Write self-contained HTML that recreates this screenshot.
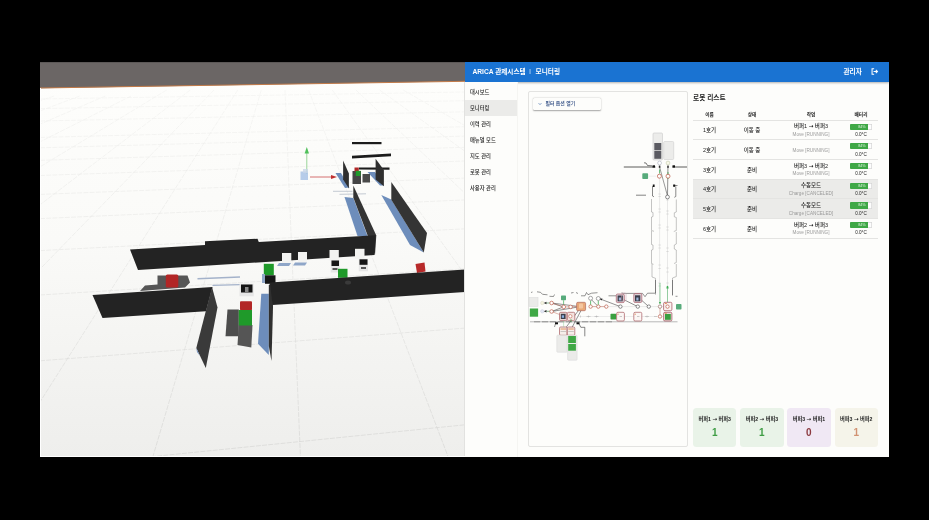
<!DOCTYPE html>
<html lang="ko">
<head>
<meta charset="utf-8">
<title>ARICA 관제시스템 | 모니터링</title>
<style>
*{box-sizing:border-box;margin:0;padding:0}
html,body{width:929px;height:520px;overflow:hidden;background:#000}
body{position:relative;font-family:"Liberation Sans","Noto Sans CJK KR",sans-serif;color:#222}
.abs{position:absolute}
#scene{position:absolute;left:0;top:0;width:929px;height:520px}
#app{position:absolute;left:465px;top:62px;width:424px;height:395px;background:#fdfdfb;overflow:hidden;will-change:transform}
#hdr{position:absolute;left:0;top:0;width:424px;height:20px;background:#1a73d2;color:#fff;font-weight:bold;font-size:6.65px;line-height:20px;box-shadow:0 1px 2px rgba(0,0,0,.3)}
#hdr .t{position:absolute;left:7.5px;top:-0.5px;white-space:nowrap}
#hdr .u{position:absolute;left:378.5px;top:-0.5px;white-space:nowrap}
#side{position:absolute;left:0;top:20px;width:52.5px;height:375px;background:#fdfdfb;border-right:1px solid #f5f5f2}
#side div{position:absolute;left:0;width:52px;height:16px;line-height:16px;padding-left:5px;font-size:5.3px;font-weight:500;color:#1c1c1c;white-space:nowrap}
#side div.sel{background:#ebebe9;height:15.5px}
#mapcard{position:absolute;left:62.5px;top:29px;width:160.5px;height:356px;border:1px solid #e3e3e1;border-radius:2px;background:#fdfdfb}
#filter{position:absolute;left:68px;top:35.5px;width:67.5px;height:12.5px;background:#fdfdfb;border-radius:1.5px;box-shadow:0 0.5px 1.5px rgba(0,0,0,.35);font-size:4.9px;line-height:12.5px;font-weight:500;color:#24427c;white-space:nowrap}
#filter span{position:absolute;left:12.5px;top:0}
h2{position:absolute;left:228px;top:28.5px;font-size:6.7px;line-height:14px;font-weight:bold;color:#222;white-space:nowrap}
table{position:absolute;left:228px;top:45px;width:185px;border-collapse:collapse;table-layout:fixed;font-size:5.5px;font-weight:500;color:#1c1c1c}
th{height:13.1px;font-size:4.7px;font-weight:bold;border-bottom:1px solid #e4e4e2;text-align:center;vertical-align:middle;padding-top:1.2px}
td{height:19.7px;border-bottom:1px solid #e4e4e2;text-align:center;vertical-align:middle;line-height:7.5px;white-space:nowrap;padding-top:2.4px}
tr.sel td{background:#ebebe9}
td .s{display:block;font-size:4.65px;color:#9a9a9a}
td .k{display:block;font-size:4.6px;color:#222;margin-top:1.2px}
td.w{padding-top:1.9px}
td.b{padding-top:2.2px}
.ar{font-family:'DejaVu Sans',sans-serif;font-size:5.6px;line-height:1px;font-weight:bold}
.bat{display:block;margin:0 auto;width:22.8px;height:6.2px;box-shadow:inset 0 0 0 0.5px #c4c4c4;border-radius:1px;background:#fdfdfd;position:relative;overflow:hidden}
.bat i{position:absolute;left:0;top:0;height:100%;width:82%;background:#3fa846;color:#dff0df;font-style:normal;font-size:3.8px;line-height:6.2px;text-align:center;text-indent:6px}
.cnt{position:absolute;top:345.5px;width:43.4px;height:39px;border-radius:3.5px;text-align:center}
.cnt b{display:block;font-size:5.2px;line-height:7px;margin-top:8.7px;color:#222;white-space:nowrap}
.cnt em{display:block;font-style:normal;font-weight:bold;font-size:10px;line-height:11px;margin-top:3.4px}
</style>
</head>
<body>
<svg id="scene" viewBox="0 0 929 520">
<defs>
<linearGradient id="fl" x1="0" y1="0" x2="0" y2="1"><stop offset="0" stop-color="#fefefc"/><stop offset="0.45" stop-color="#fafaf8"/><stop offset="1" stop-color="#eeeeec"/></linearGradient>
<linearGradient id="gg" gradientUnits="userSpaceOnUse" x1="0" y1="88" x2="0" y2="457"><stop offset="0" stop-color="#f1f1ef"/><stop offset="0.35" stop-color="#e6e6e4"/><stop offset="1" stop-color="#cfcfcd"/></linearGradient>
</defs>
<rect x="40" y="62" width="425" height="395" fill="url(#fl)"/>
<polygon points="40,62 465,62 465,81.2 40,88.2" fill="#6b6665"/>
<line x1="40" y1="88" x2="465" y2="81.3" stroke="#c27a48" stroke-width="1"/>
<!-- SCENE-START -->
<!-- floor grid -->
<clipPath id="fc"><polygon points="40,88.3 465,82 465,457 40,457"/></clipPath>
<g clip-path="url(#fc)" stroke="url(#gg)" stroke-width="0.55" fill="none" stroke-dasharray="5 1.2">
<line x1="40.0" y1="468.0" x2="465.0" y2="424.8"/>
<line x1="40.0" y1="360.8" x2="465.0" y2="328.1"/>
<line x1="40.0" y1="295.0" x2="465.0" y2="268.8"/>
<line x1="40.0" y1="250.6" x2="465.0" y2="228.8"/>
<line x1="40.0" y1="218.6" x2="465.0" y2="199.9"/>
<line x1="40.0" y1="194.4" x2="465.0" y2="178.1"/>
<line x1="40.0" y1="175.5" x2="465.0" y2="161.0"/>
<line x1="40.0" y1="160.3" x2="465.0" y2="147.3"/>
<line x1="40.0" y1="147.8" x2="465.0" y2="136.1"/>
<line x1="40.0" y1="137.4" x2="465.0" y2="126.7"/>
<line x1="40.0" y1="121.0" x2="465.0" y2="111.8"/>
<line x1="40.0" y1="108.6" x2="465.0" y2="100.7"/>
<line x1="40.0" y1="99.0" x2="465.0" y2="92.0"/>
<line x1="2.7" y1="96.0" x2="-1327.7" y2="458.0"/>
<line x1="28.4" y1="96.0" x2="-1179.7" y2="458.0"/>
<line x1="54.1" y1="96.0" x2="-1031.6" y2="458.0"/>
<line x1="79.7" y1="96.0" x2="-883.6" y2="458.0"/>
<line x1="105.4" y1="96.0" x2="-735.6" y2="458.0"/>
<line x1="131.1" y1="96.0" x2="-587.6" y2="458.0"/>
<line x1="166.7" y1="90.0" x2="-439.6" y2="458.0"/>
<line x1="190.3" y1="90.0" x2="-291.5" y2="458.0"/>
<line x1="214.0" y1="90.0" x2="-143.5" y2="458.0"/>
<line x1="237.7" y1="90.0" x2="4.5" y2="458.0"/>
<line x1="261.3" y1="90.0" x2="152.5" y2="458.0"/>
<line x1="285.0" y1="90.0" x2="300.5" y2="458.0"/>
<line x1="308.6" y1="90.0" x2="448.6" y2="458.0"/>
<line x1="332.3" y1="90.0" x2="596.6" y2="458.0"/>
<line x1="355.9" y1="90.0" x2="744.6" y2="458.0"/>
<line x1="379.6" y1="90.0" x2="892.6" y2="458.0"/>
<line x1="403.2" y1="90.0" x2="1040.7" y2="458.0"/>
</g>
<!-- far bars -->
<rect x="352" y="142" width="29.5" height="2.2" fill="#1c1c1c"/>
<polygon points="352,155.8 391,153.6 391,156.2 352,158.4" fill="#1c1c1c"/>
<polygon points="359,167.4 389.5,167.6 389.5,169.8 359,169.6" fill="#1c1c1c"/>
<!-- gizmo -->
<line x1="306.8" y1="152" x2="306.8" y2="174" stroke="#8fd08f" stroke-width="0.9"/>
<polygon points="306.8,147 309,153.5 304.600,153.500" fill="#4fc05a"/>
<rect x="300.500" y="171.500" width="7.500" height="8.500" fill="#a9c3e6" opacity="0.85"/>
<rect x="303" y="169" width="5" height="4" fill="#c9d6e8" opacity="0.8"/>
<line x1="310" y1="177" x2="332" y2="177" stroke="#d06060" stroke-width="0.9"/>
<polygon points="337,177 331,175 331,179" fill="#c03030"/>
<!-- far small walls + shadows -->
<polygon points="335.500,173 341,173 349.500,187.500 345,188" fill="#6d8dbb"/>
<polygon points="343.1,160.6 348.9,173.5 348.9,188.6 343.1,179.4" fill="#2f2f2f"/>
<polygon points="367.500,172 375,172 383.800,185.500 380,185.500" fill="#6d8dbb"/>
<!-- far cubes -->
<rect x="352.500" y="171" width="8.500" height="13" fill="#444"/>
<rect x="362.500" y="174" width="7.500" height="8.500" fill="#4a4a4a"/>
<rect x="354.500" y="167.500" width="4.300" height="4" fill="#b02828"/>
<rect x="355.800" y="170.800" width="4.700" height="5.200" fill="#1f9a2a"/>
<polygon points="375.6,158.8 383.9,170 383.9,186.3 375.6,179.4" fill="#2f2f2f"/>
<line x1="333" y1="191.300" x2="352.500" y2="191.300" stroke="#b5bcc8" stroke-width="0.8"/>
<line x1="339.500" y1="194.300" x2="366" y2="193.800" stroke="#b5bcc8" stroke-width="0.8"/>
<!-- long walls shadows -->
<polygon points="344.500,197 353.300,198 367.500,236 357.500,236" fill="#6d8dbb"/>
<polygon points="381.300,195 391.300,199.500 423.800,252.500 410,245" fill="#6d8dbb"/>
<!-- long walls -->
<polygon points="353.300,185.500 376.300,235.500 375,255 353.300,197.500" fill="#343434"/>
<polygon points="391.300,181.900 427,233 423.800,252.500 391.300,199.800" fill="#343434"/>
<!-- back wall -->
<polygon points="130,249.500 205,245 205,241.300 257.500,238.800 258.800,242 375.500,235.200 374.500,255 138,270" fill="#232323"/>
<!-- white cubes -->
<g fill="#f3f3f1">
<rect x="282" y="253" width="9.300" height="10"/>
<rect x="298" y="252" width="9" height="10.500"/>
<rect x="329.500" y="250" width="9.300" height="10.500"/>
<rect x="355" y="248.800" width="9.500" height="10"/>
</g>
<g fill="#8fa6c8">
<polygon points="279,263 291,263 289,266 277,266"/>
<polygon points="295,262.500 307,262.500 305,265.500 293,265.500"/>
</g>
<!-- robots on corridor -->
<g>
<rect x="330.800" y="260" width="8.700" height="12.500" fill="#e6e6e6"/>
<rect x="331.500" y="260.500" width="7.500" height="5.500" fill="#161616"/>
<rect x="332.500" y="268" width="5" height="2" fill="#555"/>
<rect x="358.800" y="258.800" width="9.200" height="12.500" fill="#e6e6e6"/>
<rect x="359.500" y="259.300" width="8" height="5.500" fill="#161616"/>
<rect x="361" y="267" width="5" height="2" fill="#555"/>
</g>
<rect x="338" y="268.800" width="9.500" height="9" fill="#1f9a2a"/>
<polygon points="415.500,264 424.500,262.500 425.500,271.500 417,273" fill="#b82a2a"/>
<!-- platform + red cube upper-left -->
<polygon points="157.500,275.500 187.500,275.500 190,282.500 185,287.500 140,291 145,285.500 157.500,284.500" fill="#565656"/>
<rect x="165.800" y="274.500" width="12.500" height="13" rx="1.500" fill="#b22626"/>
<line x1="197.500" y1="278.800" x2="240" y2="277" stroke="#a4b2ca" stroke-width="1.600"/>
<line x1="212.500" y1="285.300" x2="240" y2="284.600" stroke="#a4b2ca" stroke-width="1.300"/>
<!-- green cube + robot at gap -->
<rect x="263.800" y="263.800" width="10" height="11.500" fill="#1f9a2a"/>
<rect x="265" y="275.300" width="10.500" height="8.500" fill="#161616"/>
<rect x="262" y="274" width="3" height="9" fill="#8fa6c8"/>
<!-- robot alcove -->
<rect x="239.500" y="283.800" width="14.300" height="12.500" fill="#e6e6e6"/>
<rect x="241" y="284.500" width="11.500" height="8" fill="#141414"/>
<rect x="245" y="287" width="3.500" height="5" fill="#888"/>
<!-- alcove platforms and cubes -->
<polygon points="227.500,309.500 238.800,309.500 238.800,336.300 225.500,336.300" fill="#4d4d4d"/>
<polygon points="238.800,325 252.500,325 251.300,347.500 237.500,345" fill="#555"/>
<rect x="240" y="301.300" width="12" height="9" rx="1" fill="#b22626"/>
<rect x="238.800" y="310" width="13.200" height="15.500" fill="#1f9a2a"/>
<!-- front walls -->
<polygon points="92.500,295 212.500,287 206,311.200 102.500,318" fill="#232323"/>
<polygon points="212,287 217.500,307.500 205.800,368 196.300,348" fill="#3a3a3a"/>
<polygon points="196.300,348 200,356 197,352" fill="#6d8dbb"/>
<polygon points="261.300,293.800 268.800,293.800 268.800,355 258,343.800" fill="#6d8dbb"/>
<polygon points="268.800,285 272.500,282.500 273,307.500 271.500,361 268.800,346" fill="#303030"/>
<polygon points="270,282.500 465,269.500 465,292 272.500,305" fill="#232323"/>
<ellipse cx="348" cy="282.500" rx="3" ry="2" fill="#3a3a3a"/>
<!-- white border -->
<line x1="40" y1="62.5" x2="465" y2="62.5" stroke="#5c5857" stroke-width="1"/>
<line x1="464.5" y1="82" x2="464.5" y2="457" stroke="#e2e2e0" stroke-width="1"/>
<line x1="40.500" y1="88" x2="40.500" y2="457" stroke="#fff" stroke-width="1"/>
<line x1="40" y1="456.500" x2="465" y2="456.500" stroke="#fff" stroke-width="1"/>
<!-- SCENE-END -->
</svg>
<div id="app">
<div id="hdr"><span class="t">ARICA 관제시스템</span><span class="t" style="left:64.2px;font-weight:normal;font-size:6px;top:-0.8px">|</span><span class="t" style="left:70.6px">모니터링</span><span class="u">관리자</span>
<svg class="abs" style="left:405px;top:4.8px" width="9" height="9" viewBox="0 0 24 24"><path d="M11 4.500H5.500v15H11" fill="none" stroke="#fff" stroke-width="2.8"/><path d="M9.500 12h10M15.500 7.500l4.500 4.500-4.500 4.500" fill="none" stroke="#fff" stroke-width="2.800"/></svg>
</div>
<div id="side">
<div style="top:2.1px">대시보드</div>
<div class="sel" style="top:18.2px">모니터링</div>
<div style="top:34.1px">이력 관리</div>
<div style="top:50.1px">매뉴얼 모드</div>
<div style="top:65.9px">지도 관리</div>
<div style="top:81.9px">로봇 관리</div>
<div style="top:97.9px">사용자 관리</div>
</div>
<div id="mapcard"></div>
<div id="filter"><svg class="abs" style="left:5px;top:4.5px" width="4" height="4" viewBox="0 0 10 10"><path d="M1.5 3l3.5 3.5L8.500 3" fill="none" stroke="#1a4f9c" stroke-width="1.4"/></svg><span>필터 옵션 열기</span></div>
<h2>로봇 리스트</h2>
<table>
<colgroup><col style="width:33px"><col style="width:52px"><col style="width:66px"><col style="width:34px"></colgroup>
<tr><th>이름</th><th>상태</th><th>작업</th><th>배터리</th></tr>
<tr><td>1호기</td><td>이동 중</td><td class="w">버퍼1 <span class="ar">→</span> 버퍼3<span class="s">Move [RUNNING]</span></td><td class="b"><span class="bat"><i>84%</i></span><span class="k">0.0°C</span></td></tr>
<tr><td>2호기</td><td>이동 중</td><td><span class="s">Move [RUNNING]</span></td><td class="b"><span class="bat"><i>84%</i></span><span class="k">0.0°C</span></td></tr>
<tr><td>3호기</td><td>준비</td><td class="w">버퍼3 <span class="ar">→</span> 버퍼2<span class="s">Move [RUNNING]</span></td><td class="b"><span class="bat"><i>84%</i></span><span class="k">0.0°C</span></td></tr>
<tr class="sel"><td>4호기</td><td>준비</td><td class="w">수동모드<span class="s">Charge [CANCELED]</span></td><td class="b"><span class="bat"><i>84%</i></span><span class="k">0.0°C</span></td></tr>
<tr class="sel"><td>5호기</td><td>준비</td><td class="w">수동모드<span class="s">Charge [CANCELED]</span></td><td class="b"><span class="bat"><i>84%</i></span><span class="k">0.0°C</span></td></tr>
<tr><td>6호기</td><td>준비</td><td class="w">버퍼2 <span class="ar">→</span> 버퍼3<span class="s">Move [RUNNING]</span></td><td class="b"><span class="bat"><i>84%</i></span><span class="k">0.0°C</span></td></tr>
</table>
<div class="cnt" style="left:228.1px;background:#e9f3e8"><b>버퍼1 <span class="ar">→</span> 버퍼3</b><em style="color:#3f9d45">1</em></div>
<div class="cnt" style="left:275.2px;background:#e9f3e8"><b>버퍼2 <span class="ar">→</span> 버퍼3</b><em style="color:#3f9d45">1</em></div>
<div class="cnt" style="left:322.2px;background:#f0e8f4"><b>버퍼3 <span class="ar">→</span> 버퍼1</b><em style="color:#8c3a40">0</em></div>
<div class="cnt" style="left:369.6px;background:#f5f4ea"><b>버퍼3 <span class="ar">→</span> 버퍼2</b><em style="color:#d19272">1</em></div>
<svg id="map" class="abs" style="left:-465px;top:-62px" width="929" height="520" viewBox="0 0 929 520">
<!-- MAP-START -->
<!-- top storage boxes -->
<rect x="653" y="133" width="9.500" height="27" rx="1" fill="#ececea" stroke="#c9c9c9" stroke-width="0.6"/>
<rect x="654.300" y="143" width="7" height="7.300" fill="#5b5b62"/>
<rect x="654.300" y="151" width="7" height="7.800" fill="#5b5b62"/>
<rect x="663.700" y="141.500" width="10" height="18" rx="1" fill="#ececea" stroke="#cfcfcf" stroke-width="0.6"/>
<!-- top horizontal wall -->
<line x1="623.800" y1="167" x2="655.500" y2="167" stroke="#333" stroke-width="0.8"/>
<line x1="672.500" y1="167" x2="687" y2="167" stroke="#333" stroke-width="0.8"/>
<polyline points="644,162.800 646,163 647.500,165.500 652,165.800" fill="none" stroke="#222" stroke-width="0.6"/>
<rect x="652.500" y="165.300" width="2.500" height="2.300" fill="#111"/>
<rect x="672.500" y="165.300" width="2.500" height="2.300" fill="#111"/>
<circle cx="659.600" cy="163" r="1.900" fill="#fff" stroke="#9aa0b0" stroke-width="0.5"/>
<circle cx="668" cy="163" r="1.900" fill="#f8f8e8" stroke="#b8c0a0" stroke-width="0.5"/>
<!-- faint vertical guide lines -->
<g stroke="#d4d4d4" stroke-width="0.5">
<line x1="659.600" y1="167" x2="659.600" y2="303"/>
<line x1="667.500" y1="167" x2="667.500" y2="303"/>
</g>
<g stroke="#c4c4c4" stroke-width="0.5">
<path d="M658.400 194h2.400M658.400 196.500h2.400M658.400 209h2.400M658.400 212h2.400M658.400 225h2.400M658.400 228h2.400M658.400 245h2.400M658.400 248h2.400M658.400 265h2.400M658.400 268.500h2.400M658.400 283h2.400M658.400 286h2.400"/>
<path d="M666.300 200h2.400M666.300 211h2.400M666.300 214h2.400M666.300 227h2.400M666.300 230h2.400M666.300 248h2.400M666.300 251.500h2.400M666.300 268h2.400M666.300 272h2.400M666.300 283h2.400"/>
</g>
<!-- V lines -->
<line x1="659.600" y1="167" x2="667.500" y2="196" stroke="#555" stroke-width="0.6"/>
<line x1="668" y1="167" x2="667.500" y2="196" stroke="#555" stroke-width="0.6"/>
<rect x="658.800" y="165.600" width="1.600" height="2.200" fill="#333"/>
<rect x="667.200" y="165.600" width="1.600" height="2.200" fill="#333"/>
<path d="M659.600 169.500v4" stroke="#3fae55" stroke-width="0.8"/>
<path d="M668 172v7" stroke="#3fae55" stroke-width="0.8"/>
<rect x="642.300" y="173.200" width="5.800" height="5.800" rx="0.800" fill="#57ab7b"/>
<line x1="649" y1="176.200" x2="656" y2="176.200" stroke="#dcdcdc" stroke-width="0.5"/>
<circle cx="659.400" cy="176.200" r="2" fill="#fff" stroke="#b8533f" stroke-width="0.7"/>
<circle cx="668" cy="176.200" r="2" fill="#fff" stroke="#b8533f" stroke-width="0.7"/>
<circle cx="667.500" cy="197" r="1.900" fill="#fff" stroke="#444" stroke-width="0.6"/>
<line x1="636" y1="195.200" x2="646" y2="195.200" stroke="#333" stroke-width="0.6"/>
<!-- vertical corridor walls -->
<g fill="none" stroke="#3a3a3a" stroke-width="0.6">
<path d="M653.800 185.500l-1.300 1v9.500l1.500 0.800"/>
<rect x="652.800" y="184.500" width="1.800" height="2.500" fill="#111" stroke="none"/>
<path d="M673.500 185.500h4" />
<rect x="673.200" y="184.500" width="2" height="2.300" fill="#111" stroke="none"/>
<path d="M675.800 186.500v10l-1.500 0.800"/>
</g>
<g fill="none" stroke="#8a8a8a" stroke-width="0.5">
<path d="M651.500 199v13l1.500 0.500v4l-1.500 0.500v13.500l2.500 0.800M651.500 231v13.500l1.500 0.500v4.500l-1.500 0.500v13.500l2 0.800M652 264v13l3.500 1.300v16.500"/>
<path d="M676.300 199.500v12.500l-2 0.800v4l2 0.700v13l-2.500 1M676.300 232v12l-2 1v4l2 1v12.500l-2.300 1M676.300 264v12.500l-3.800 1.500v17"/>
</g>
<!-- green vertical arrows bottom -->
<line x1="660" y1="283" x2="660" y2="303.500" stroke="#5ab870" stroke-width="0.6"/>
<polygon points="660,304.500 658.900,302 661.100,302" fill="#3fae55"/>
<line x1="667.500" y1="288" x2="667.500" y2="303" stroke="#5ab870" stroke-width="0.6"/>
<polygon points="667.500,285.500 666.300,288.500 668.700,288.500" fill="#3fae55"/>
<circle cx="667.500" cy="287" r="0.900" fill="#3fae55"/>
<!-- horizontal corridor top wall -->
<g fill="none" stroke="#3c3c3c" stroke-width="0.55">
<path d="M655.500 280v13.200h-8l-2.500 3.500l-2.500-3.300h-19l-2 -0.500"/>
<path d="M672.500 280v15.500M675.500 296.300h2"/>
<path d="M531 292.500l1.500 -0.500M537 291.800l3.500 0.500l2 2l5 0.500M549.500 296.300l4 0.200l1 -2"/>
<path d="M571 293l2.500 -0.500M576 292.500l2 1M581 295.800h4l1.500 -3.300l1.500 2.200l3.500 -1.500l6 -0.500M608.500 295.800h8"/>
</g>
<!-- bottom wall -->
<line x1="530" y1="321.800" x2="677.500" y2="321.800" stroke="#9a9a9a" stroke-width="0.7"/>
<line x1="534" y1="321.800" x2="612" y2="321.800" stroke="#555" stroke-width="0.5" stroke-dasharray="6 2"/>
<rect x="555" y="322.300" width="3" height="2" fill="#111"/>
<rect x="576.500" y="322.300" width="3" height="2" fill="#111"/>
<path d="M555.500 323.500l-1 3.500" stroke="#333" stroke-width="0.5" fill="none"/>
<path d="M579 323.800l1.800 3.500h4v9" stroke="#333" stroke-width="0.6" fill="none"/>
<!-- row guides -->
<line x1="590" y1="306.600" x2="668" y2="306.600" stroke="#d6d6d6" stroke-width="0.5"/>
<line x1="578" y1="316.500" x2="664" y2="316.500" stroke="#dadada" stroke-width="0.5"/>
<g stroke="#a8a8a8" stroke-width="0.5" fill="none">
<path d="M580.500 315.500v2M586.500 316.500h4M588.500 315.500v2M594.500 316.500h4M596.500 315.500v2M645 316.500h4M647 315.500v2M654 316.500h3"/>
</g>
<!-- left storage -->
<rect x="529" y="297.500" width="9" height="9" fill="#ebebe9" stroke="#d8d8d8" stroke-width="0.5"/>
<rect x="529.800" y="308.500" width="8.300" height="8.200" fill="#3fa845"/>
<circle cx="542.300" cy="303" r="1.700" fill="#f4f4e0" stroke="#d0d0b8" stroke-width="0.4"/>
<circle cx="542.300" cy="311.300" r="1.700" fill="#e4e8f4" stroke="#c0c4d4" stroke-width="0.4"/>
<polygon points="543.800,303 546.500,301.800 546.500,304.200" fill="#222"/>
<polygon points="543.800,311.300 546.500,310.100 546.500,312.500" fill="#222"/>
<line x1="546.500" y1="303" x2="550" y2="303" stroke="#3a8a4a" stroke-width="0.6"/>
<line x1="546.500" y1="311.300" x2="550" y2="311.300" stroke="#3a8a4a" stroke-width="0.6"/>
<!-- connecting lines left cluster -->
<g stroke="#4a4a4a" stroke-width="0.6" fill="none">
<path d="M551.600 303L577 306.300M551.600 311.500L577 307.200M551.600 303l12 3.900M551.600 311.500l12 -4.600"/>
<path d="M578.800 310L565 328.800M581.300 310L571.300 328.800"/>
</g>
<g stroke="#c07060" stroke-width="0.5" fill="none"><path d="M551.600 303L563.800 306.900L570.600 306.900L577 306.500M551.600 311.500l8 3"/></g>
<rect x="561" y="295.600" width="5" height="4.700" rx="0.700" fill="#57ab7b"/>
<line x1="563.600" y1="300.300" x2="563.600" y2="304.500" stroke="#3fae55" stroke-width="0.7"/>
<g fill="#fff" stroke="#b8533f" stroke-width="0.65">
<circle cx="551.600" cy="303" r="1.800"/><circle cx="551.600" cy="311.500" r="1.800"/>
<circle cx="563.800" cy="306.900" r="1.800"/><circle cx="570.600" cy="306.900" r="1.800"/>
</g>
<!-- orange box -->
<rect x="576.600" y="302.300" width="9" height="8.400" rx="1.300" fill="#e9a877" stroke="#b06a62" stroke-width="0.7"/>
<rect x="579" y="303.500" width="4" height="5" rx="0.800" fill="#f4c6a0"/>
<!-- robots lower-left -->
<rect x="559.500" y="312.300" width="7.500" height="8.300" rx="1.200" fill="#ead8d4" stroke="#a85a60" stroke-width="0.7"/>
<rect x="560.800" y="313.800" width="4.800" height="5.200" fill="#3c3f4c"/>
<rect x="561.800" y="315.300" width="2.200" height="2.500" fill="#8ab0e0"/>
<rect x="567.300" y="312.300" width="7.500" height="8.300" rx="1.200" fill="#f3e4e0" stroke="#a85a60" stroke-width="0.7"/>
<circle cx="570.300" cy="316.300" r="1.700" fill="#fff" stroke="#c0604a" stroke-width="0.6"/>
<rect x="559.500" y="327" width="7.500" height="8.300" rx="1.200" fill="#f6eeea" stroke="#a85a60" stroke-width="0.7"/>
<rect x="567.300" y="327" width="7.500" height="8.300" rx="1.200" fill="#f6eeea" stroke="#a85a60" stroke-width="0.7"/>
<path d="M560.500 329h5.500M568.300 329h5.500" stroke="#e07a3a" stroke-width="0.8"/>
<path d="M560.500 331.500h5.500M568.300 331.500h5.500" stroke="#888" stroke-width="0.4"/>
<line x1="563.600" y1="321" x2="563.600" y2="327" stroke="#9ad0a0" stroke-width="0.5"/>
<line x1="571" y1="319" x2="571" y2="322" stroke="#3fae55" stroke-width="0.7"/>
<!-- lower storage column -->
<rect x="556.800" y="335.200" width="10.300" height="17" rx="0.800" fill="#ebebe9" stroke="#d6d6d6" stroke-width="0.5"/>
<rect x="567.600" y="335.200" width="9.500" height="25" rx="0.800" fill="#ebebe9" stroke="#d6d6d6" stroke-width="0.5"/>
<rect x="568.200" y="336" width="7.700" height="7" fill="#3fa845"/>
<rect x="568.200" y="344" width="7.700" height="6.700" fill="#3fa845"/>
<!-- middle cluster row1 -->
<g fill="#fff" stroke="#555" stroke-width="0.5">
<circle cx="590.600" cy="298.300" r="2"/><circle cx="598.300" cy="298.500" r="2"/>
</g>
<path d="M590.600 300.800v4M598.300 300.800v4" stroke="#3fae55" stroke-width="0.8"/>
<g stroke="#4a4a4a" stroke-width="0.6" fill="none">
<path d="M591.500 299.800l6 6M600.300 299l20 7.600M622.500 299l15.200 7.600M640 298.800l8.700 7.800"/>
</g>
<polygon points="599.800,298.800 602.500,298.600 601.500,300.600" fill="#222"/>
<path d="M590.600 306.600h15.600" stroke="#c07060" stroke-width="0.5"/>
<g fill="#fff" stroke="#b8533f" stroke-width="0.65">
<circle cx="590.600" cy="306.600" r="1.700"/><circle cx="598.300" cy="306.600" r="1.700"/><circle cx="606.300" cy="306.600" r="1.700"/>
</g>
<g fill="#fff" stroke="#444" stroke-width="0.6">
<circle cx="620.400" cy="306.600" r="1.700"/><circle cx="637.800" cy="306.600" r="1.700"/><circle cx="648.800" cy="306.600" r="1.700"/>
</g>
<!-- robots on row 1 -->
<rect x="616.300" y="294" width="8" height="8.600" rx="1.300" fill="#dccfd4" stroke="#a85a68" stroke-width="0.7"/>
<rect x="617.600" y="295.500" width="5.200" height="5.800" fill="#3a3d4a"/>
<rect x="618.800" y="297.500" width="2.200" height="3" fill="#9ab4d8"/>
<rect x="621.500" y="293" width="4.500" height="8" rx="1" fill="none" stroke="#c8a0b0" stroke-width="0.5"/>
<rect x="633.800" y="293.500" width="8" height="9" rx="1.300" fill="#dccfd4" stroke="#a85a68" stroke-width="0.7"/>
<rect x="635" y="295.300" width="5.300" height="6" fill="#3a3d4a"/>
<rect x="636.300" y="297.500" width="2.200" height="3" fill="#9ab4d8"/>
<!-- row 2 items -->
<rect x="610.500" y="313.800" width="5.800" height="5.600" rx="0.700" fill="#3aa040"/>
<rect x="616.600" y="312.300" width="7.800" height="8.700" rx="1.300" fill="#fbf6f4" stroke="#a85a60" stroke-width="0.7"/>
<rect x="633.800" y="312.300" width="8" height="8.700" rx="1.300" fill="#fbf6f4" stroke="#a85a60" stroke-width="0.7"/>
<path d="M619.500 316.500h2.500M637 316.500h2.500" stroke="#999" stroke-width="0.5"/>
<path d="M618 313.600v1.300M635.200 313.600v1.300" stroke="#e07a3a" stroke-width="0.8"/>
<!-- right end -->
<path d="M660 306.600v10" stroke="#b86a5a" stroke-width="0.5"/>
<circle cx="660" cy="306.600" r="1.700" fill="#fff" stroke="#8a5a50" stroke-width="0.6"/>
<circle cx="660" cy="316.500" r="1.700" fill="#fff" stroke="#b8533f" stroke-width="0.65"/>
<rect x="663.600" y="302.300" width="8.300" height="8.400" rx="1.300" fill="#faf2f0" stroke="#a04a58" stroke-width="0.7"/>
<circle cx="667.500" cy="306.600" r="1.700" fill="#fff" stroke="#b8533f" stroke-width="0.65"/>
<rect x="663.600" y="312.300" width="8.300" height="8.700" rx="1.300" fill="#e8dcd8" stroke="#a04a58" stroke-width="0.7"/>
<rect x="665" y="314" width="5.800" height="5.800" fill="#3aa040"/>
<path d="M664.800 303.500h2M664.800 313.300h2" stroke="#e07a3a" stroke-width="0.8"/>
<rect x="676" y="304" width="5.500" height="5.600" rx="0.800" fill="#57ab7b"/>
<!-- MAP-END -->
</svg>
</div>
</body>
</html>
